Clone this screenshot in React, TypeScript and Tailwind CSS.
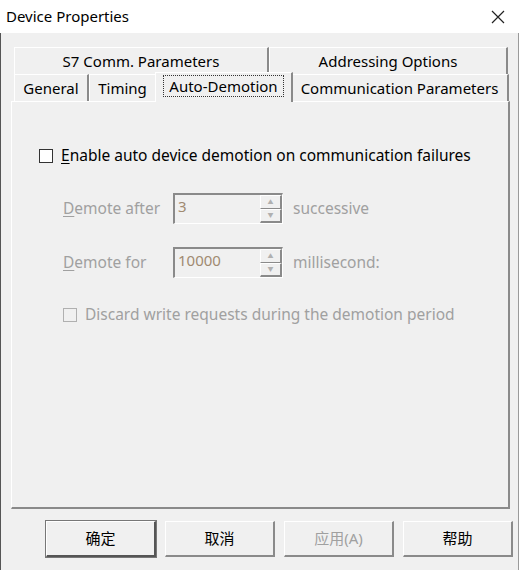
const ui = '"Noto Sans", "Noto Sans CJK SC", sans-serif';

function Tab({ label, w, selected }: { label: string; w: string; selected?: boolean }) {
  return (
    <div
      className={`${w} flex items-center justify-center border-t border-l border-r-2 border-t-white border-l-white border-r-[#8a8a8a] bg-[#f0f0f0] ${
        selected ? "relative z-10 -mx-[2px] -mt-[3px] -mb-px h-[30px] pb-[3px]" : "h-[27px]"
      }`}
    >
      {selected ? (
        <span className="border border-dotted border-[#333] px-[5px] leading-[20px]">{label}</span>
      ) : (
        <span>{label}</span>
      )}
    </div>
  );
}

function Spin({ value }: { value: string }) {
  return (
    <div className="flex h-[31px] w-[110px] border-t-2 border-l-2 border-b border-r border-t-[#8a8a8a] border-l-[#8a8a8a] border-b-white border-r-white bg-[#f0f0f0]">
      <div className="flex-1 pl-[3px] text-[15px] leading-[22px] text-[#a08a70]">{value}</div>
      <div className="flex w-[22px] flex-col">
        <div className="flex h-[14px] items-center justify-center border-t border-l border-r-2 border-b border-t-white border-l-white border-r-[#8a8a8a] border-b-[#8a8a8a] text-[6px] text-[#b0b0b0]">
          ▲
        </div>
        <div className="flex h-[15px] items-center justify-center border-t border-l border-r-2 border-b-2 border-t-white border-l-white border-r-[#8a8a8a] border-b-[#8a8a8a] text-[6px] text-[#b0b0b0]">
          ▼
        </div>
      </div>
    </div>
  );
}

function Btn({ label, isDefault, disabled }: { label: string; isDefault?: boolean; disabled?: boolean }) {
  return (
    <div
      className={`flex h-[36px] w-[110px] items-center justify-center border-t border-l border-b-2 border-r-2 border-t-white border-l-white text-[15px] ${
        isDefault ? "border-b-[#555] border-r-[#555] outline outline-1 outline-[#777]" : "border-b-[#8a8a8a] border-r-[#8a8a8a]"
      } ${disabled ? "text-[#a0a0a0]" : "text-black"}`}
    >
      {label}
    </div>
  );
}

export default function App() {
  return (
    <div className="h-[570px] w-[519px] overflow-hidden bg-[#f0f0f0] text-black" style={{ fontFamily: ui }}>
      <div className="flex h-[33px] items-center justify-between bg-white pl-[6px] pr-[14px]">
        <span className="text-[15px]">Device Properties</span>
        <svg width="14" height="14" viewBox="0 0 14 14">
          <path d="M1 1 L13 13 M13 1 L1 13" stroke="#222" strokeWidth="1.2" />
        </svg>
      </div>

      <div className="h-[537px] border-l border-r border-l-[#555] border-r-[#9a9a9a]">
        <div className="pl-[13px] pt-[14px] text-[15px]">
          <div className="flex">
            <Tab label="S7 Comm. Parameters" w="w-[255px]" />
            <Tab label="Addressing Options" w="w-[239px]" />
          </div>
          <div className="flex items-end">
            <Tab label="General" w="w-[75px]" />
            <Tab label="Timing" w="w-[68px]" />
            <Tab label="Auto-Demotion" w="w-[138px]" selected />
            <Tab label="Communication Parameters" w="w-[218px]" />
          </div>
        </div>

        <div className="ml-[10px] h-[408px] w-[499px] border-t border-l border-r-2 border-b-2 border-t-white border-l-white border-r-[#8a8a8a] border-b-[#8a8a8a] text-[15.5px]">
          <div className="flex items-center pl-[27px] pt-[42px]">
            <div className="h-[14px] w-[14px] border border-[#333] bg-white" />
            <span className="ml-[8px]">
              <span className="underline underline-offset-2">E</span>nable auto device demotion on communication failures
            </span>
          </div>

          <div className="mt-[26px] flex flex-col gap-[23px] pl-[51px] text-[#a0a0a0]">
            <div className="flex items-center">
              <span className="w-[110px]">
                <span className="underline underline-offset-2">D</span>emote after
              </span>
              <Spin value="3" />
              <span className="ml-[10px]">successive</span>
            </div>
            <div className="flex items-center">
              <span className="w-[110px]">
                <span className="underline underline-offset-2">D</span>emote for
              </span>
              <Spin value="10000" />
              <span className="ml-[10px]">millisecond:</span>
            </div>
            <div className="mt-[2px] flex items-center">
              <div className="h-[14px] w-[14px] border border-[#b0b0b0] bg-[#f0f0f0]" />
              <span className="ml-[8px]">Discard write requests during the demotion period</span>
            </div>
          </div>
        </div>

        <div className="mt-[12px] flex gap-[9px] pl-[45px]">
          <Btn label="确定" isDefault />
          <Btn label="取消" />
          <Btn label="应用(A)" disabled />
          <Btn label="帮助" />
        </div>
      </div>
    </div>
  );
}
